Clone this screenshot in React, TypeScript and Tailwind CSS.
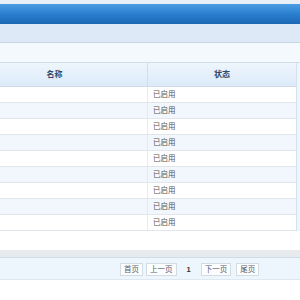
import React from 'react';

const rows = Array.from({ length: 9 }, (_, i) => ({ id: i + 1, name: '', status: '已启用' }));

const PageButton: React.FC<{ label: string; className?: string }> = ({ label, className = '' }) => (
  <span className={`h-[13px] px-[3px] flex items-center border border-[#d3dbe3] bg-[#fbfdff] text-[#556070] text-[7.5px] leading-none ${className}`}>
    {label}
  </span>
);

export default function App() {
  return (
    <div className="w-[300px] h-[300px] bg-white overflow-hidden flex flex-col font-['Liberation_Sans','Noto_Sans_CJK_SC',sans-serif]">
      {/* top strips */}
      <div className="h-[4px] bg-[#e9eff6]" />
      <div className="h-[20px] bg-gradient-to-b from-[#4b9de2] via-[#2a7fd0] to-[#1b68b5]" />
      <div className="h-[19px] bg-[#dde9f6] border-b border-[#c8d5e2]" />
      <div className="h-[20px] bg-[#f4f9fe] border-b border-[#d2dde8]" />

      {/* table */}
      <div className="flex">
        <div className="w-[297px] border-r border-[#d6e0ea]">
          <div className="h-[24px] flex bg-gradient-to-b from-[#eef5fc] to-[#dcebf9] border-b border-[#cfdbe7] text-[8px] font-bold text-[#2d4a6e]">
            <div className="w-[148px] border-r border-[#d2dde8] flex items-center justify-center pr-[38px]">名称</div>
            <div className="flex-1 flex items-center justify-center">状态</div>
          </div>
          {rows.map((r, i) => (
            <div
              key={r.id}
              className={`h-[16px] flex border-b border-[#e1e6eb] text-[7.5px] text-[#555] ${i % 2 === 1 ? 'bg-[#f1f7fd]' : 'bg-white'}`}
            >
              <div className="w-[148px] border-r border-[#e6ebf0]" />
              <div className="flex-1 flex items-center pl-[5px]">{r.status}</div>
            </div>
          ))}
        </div>
        <div className="flex-1 bg-[#eef5fc]" />
      </div>

      <div className="h-[19px] bg-white" />
      <div className="h-[8px] bg-[#e8ebee] border-b border-[#cfdbe7]" />

      {/* pagination */}
      <div className="h-[22px] bg-[#eef6fd] border-b border-[#dfe8f1] flex items-center gap-[3px] pl-[120px] pt-[2px]">
        <PageButton label="首页" />
        <PageButton label="上一页" />
        <span className="px-[7px] text-[7.5px] font-bold text-[#333]">1</span>
        <PageButton label="下一页" />
        <PageButton label="尾页" className="ml-[2px]" />
      </div>
      <div className="flex-1 bg-white" />
    </div>
  );
}
